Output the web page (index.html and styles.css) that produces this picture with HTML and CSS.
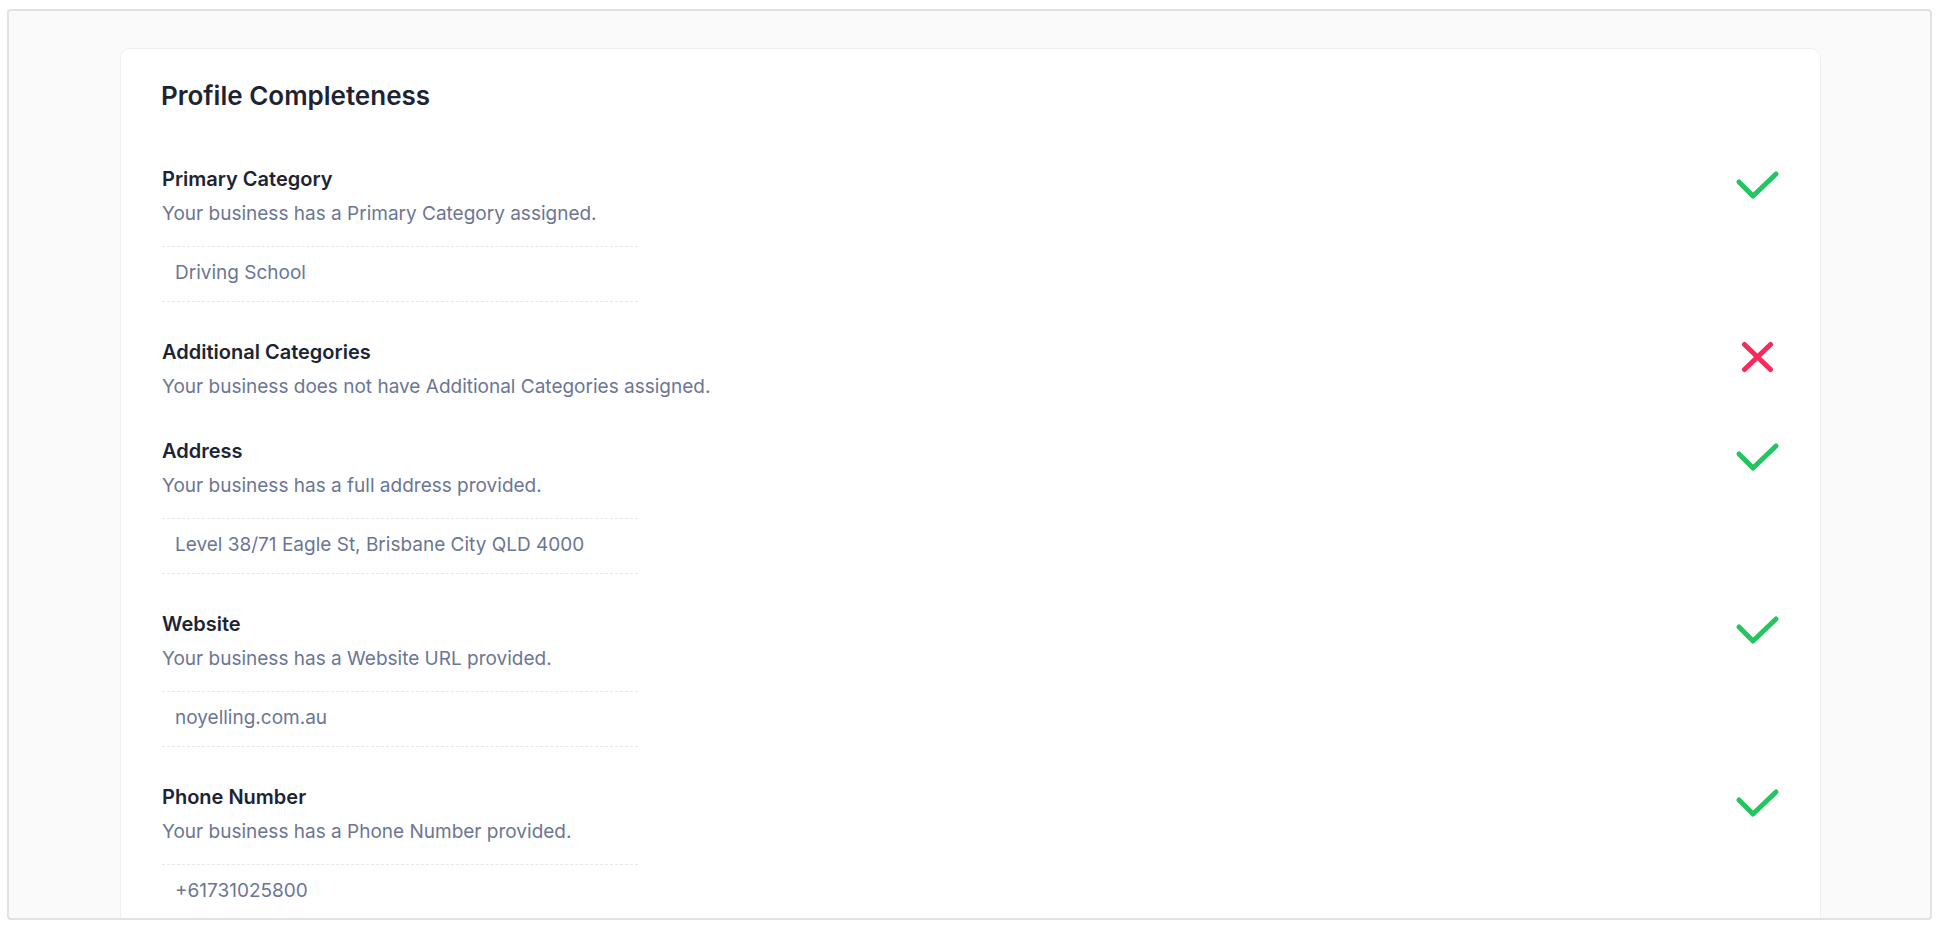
FILE: index.html
```html
<!DOCTYPE html>
<html lang="en">
<head>
<meta charset="utf-8">
<title>Profile Completeness</title>
<link rel="stylesheet" href="styles.css">
</head>
<body>
<div class="frame">
  <section class="card">
    <h2 class="card-title">Profile Completeness</h2>
    <div class="items">
      <div class="item">
        <div class="item-body">
          <div class="item-label">Primary Category</div>
          <div class="item-desc">Your business has a Primary Category assigned.</div>
          <div class="item-value">Driving School</div>
        </div>
        <svg class="status" viewBox="0 0 46 32" width="46" height="32" aria-hidden="true"><polyline class="ok" points="5,14 19,28 42,6"/></svg>
      </div>
      <div class="item">
        <div class="item-body">
          <div class="item-label">Additional Categories</div>
          <div class="item-desc">Your business does not have Additional Categories assigned.</div>
        </div>
        <svg class="status" viewBox="0 0 46 32" width="46" height="32" aria-hidden="true"><path class="bad" d="M10.5 3.5 L36.5 28.5 M36.5 3.5 L10.5 28.5"/></svg>
      </div>
      <div class="item">
        <div class="item-body">
          <div class="item-label">Address</div>
          <div class="item-desc">Your business has a full address provided.</div>
          <div class="item-value">Level 38/71 Eagle St, Brisbane City QLD 4000</div>
        </div>
        <svg class="status" viewBox="0 0 46 32" width="46" height="32" aria-hidden="true"><polyline class="ok" points="5,14 19,28 42,6"/></svg>
      </div>
      <div class="item">
        <div class="item-body">
          <div class="item-label">Website</div>
          <div class="item-desc">Your business has a Website URL provided.</div>
          <div class="item-value">noyelling.com.au</div>
        </div>
        <svg class="status" viewBox="0 0 46 32" width="46" height="32" aria-hidden="true"><polyline class="ok" points="5,14 19,28 42,6"/></svg>
      </div>
      <div class="item">
        <div class="item-body">
          <div class="item-label">Phone Number</div>
          <div class="item-desc">Your business has a Phone Number provided.</div>
          <div class="item-value">+61731025800</div>
        </div>
        <svg class="status" viewBox="0 0 46 32" width="46" height="32" aria-hidden="true"><polyline class="ok" points="5,14 19,28 42,6"/></svg>
      </div>
    </div>
  </section>
</div>
</body>
</html>
```
FILE: styles.css
```css
* { box-sizing: border-box; }

html, body {
  margin: 0;
  background: #ffffff;
}

body {
  padding: 9px 8px 0 7px;
  font-family: Inter, "Noto Sans", "Liberation Sans", sans-serif;
}

.frame {
  width: 1925px;
  height: 911px;
  border: 2px solid #e2e2e2;
  border-radius: 4px;
  background: #fafafa;
  overflow: hidden;
  padding: 37px 109px 0 111px;
}

.card {
  background: #ffffff;
  border: 1px solid #efeff1;
  border-radius: 10px;
  padding: 31px 40px 40px 40px;
}

.card-title {
  margin: 0 0 53px 0;
  font-size: 26px;
  line-height: 32px;
  font-weight: 600;
  color: #1c2434;
}

.items {
  display: flex;
  flex-direction: column;
  gap: 36px;
  padding-left: 1px;
}

.item {
  display: flex;
  justify-content: space-between;
  align-items: flex-start;
}

.item-label {
  font-size: 20px;
  line-height: 28px;
  font-weight: 600;
  color: #1c2434;
}

.item-desc {
  margin-top: 7px;
  font-size: 19px;
  line-height: 28px;
  color: #6b7694;
}

.item-value {
  margin-top: 18px;
  width: 476px;
  padding: 12px 13px 14px 13px;
  border-top: 1px dashed #e6e7eb;
  border-bottom: 1px dashed #e6e7eb;
  font-size: 19px;
  line-height: 28px;
  color: #6b7694;
}

.status {
  display: block;
  flex: none;
  margin-top: 3px;
}

.status .ok,
.status .bad {
  fill: none;
  stroke-width: 5;
  stroke-linecap: round;
  stroke-linejoin: round;
}

.status .ok { stroke: #22c55e; }
.status .bad { stroke: #f72b5b; }
```
